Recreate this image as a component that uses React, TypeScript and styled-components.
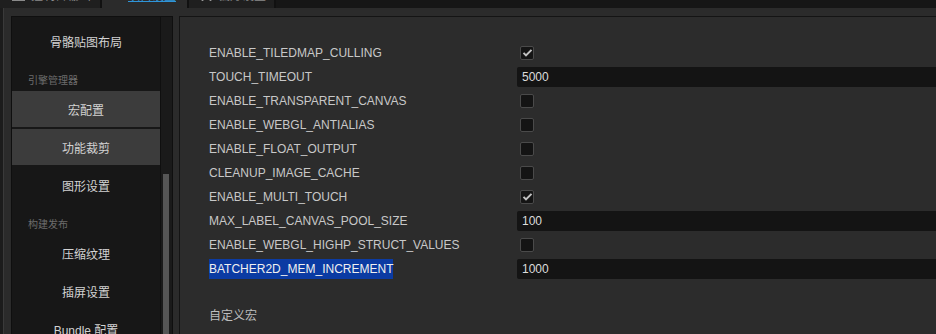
import React from 'react';
import styled, { createGlobalStyle } from 'styled-components';

const GlobalStyle = createGlobalStyle`
  html, body {
    margin: 0;
    padding: 0;
    background: #2b2b2b;
    overflow: hidden;
  }
`;

const FONT = `"Liberation Sans", Arial, "Noto Sans CJK SC", sans-serif`;

const Page = styled.div`
  width: 1000px;
  height: 334px;
  display: flex;
  flex-direction: column;
  background: #2b2b2b;
  font-family: ${FONT};
  overflow: hidden;
`;

const TabBar = styled.div`
  height: 8px;
  flex: none;
  display: flex;
  background: #161616;
  overflow: hidden;
`;

const Tab = styled.div<{ $active?: boolean; $width: number }>`
  width: ${p => p.$width}px;
  height: 8px;
  flex: none;
  display: flex;
  align-items: flex-end;
  gap: 6px;
  padding: 0 0 5px 12px;
  box-sizing: border-box;
  background: ${p => (p.$active ? '#2b2b2b' : '#1f1f1f')};
  border-right: 2px solid #111;
  overflow: hidden;
  color: ${p => (p.$active ? '#2f95d8' : '#8a8a8a')};
  font-size: 12px;
  line-height: 14px;
  white-space: nowrap;
  svg { flex: none; margin-bottom: 2px; }
`;

const Body = styled.div`
  flex: 1;
  min-height: 0;
  display: flex;
  padding-top: 8px;
`;

const EdgeStrip = styled.div`
  width: 3px;
  flex: none;
  margin-top: -8px;
  background: #1c1c1c;
  border-right: 1px solid #3a3a3a;
  margin-right: 7px;
`;

const Sidebar = styled.div`
  width: 162px;
  flex: none;
  box-sizing: border-box;
  display: flex;
  border: 1px solid #0f0f0f;
  border-bottom: none;
  background: #171717;
`;

const NavList = styled.div`
  width: 148px;
  flex: none;
  padding-top: 6px;
  border-right: 1px solid #0f0f0f;
  overflow: hidden;
`;

const NavItem = styled.div<{ $highlighted?: boolean }>`
  height: 36px;
  margin-bottom: 2px;
  display: flex;
  align-items: center;
  justify-content: center;
  background: ${p => (p.$highlighted ? '#3c3c3c' : 'transparent')};
  color: #d2d2d2;
  font-size: 12px;
  white-space: nowrap;
`;

const NavHeader = styled.div`
  height: 30px;
  box-sizing: border-box;
  padding: 14px 0 0 16px;
  line-height: 12px;
  font-size: 10px;
  color: #6c6c6c;
`;

const ScrollTrack = styled.div`
  width: 11px;
  flex: none;
  display: flex;
  flex-direction: column;
  box-sizing: border-box;
  padding: 0 3px 0 2px;
  background: #1a1a1a;
`;

const ScrollThumb = styled.div`
  flex: 1;
  background: #555;
`;

const Main = styled.div`
  flex: 1;
  margin-left: 6px;
  border: 1px solid #141414;
  border-bottom: none;
  background: #2c2c2c;
  padding: 24px 0 0 29px;
`;

const Row = styled.div`
  height: 24px;
  display: grid;
  grid-template-columns: 308px 1fr;
  align-items: center;
`;

const Label = styled.span<{ $selected?: boolean }>`
  justify-self: start;
  font-size: 12px;
  line-height: 20px;
  color: ${p => (p.$selected ? '#f0f0f0' : '#c8c8c8')};
  background: ${p => (p.$selected ? '#0b3ba3' : 'transparent')};
  white-space: nowrap;
`;

const Check = styled.div`
  width: 14px;
  height: 14px;
  margin-left: 3px;
  box-sizing: border-box;
  border: 1px solid #4a4a4a;
  border-radius: 2px;
  background: #141414;
  display: flex;
  align-items: center;
  justify-content: center;
`;

const NumberBox = styled.div`
  height: 20px;
  display: flex;
  align-items: center;
  padding-left: 5px;
  border-radius: 2px;
  background: #141414;
  color: #dcdcdc;
  font-size: 12px;
`;

const SectionTitle = styled.div`
  margin-top: 26px;
  line-height: 18px;
  font-size: 12px;
  color: #bdbdbd;
`;

type Macro = { name: string; value: boolean | number; selected?: boolean };

const macros: Macro[] = [
  { name: 'ENABLE_TILEDMAP_CULLING', value: true },
  { name: 'TOUCH_TIMEOUT', value: 5000 },
  { name: 'ENABLE_TRANSPARENT_CANVAS', value: false },
  { name: 'ENABLE_WEBGL_ANTIALIAS', value: false },
  { name: 'ENABLE_FLOAT_OUTPUT', value: false },
  { name: 'CLEANUP_IMAGE_CACHE', value: false },
  { name: 'ENABLE_MULTI_TOUCH', value: true },
  { name: 'MAX_LABEL_CANVAS_POOL_SIZE', value: 100 },
  { name: 'ENABLE_WEBGL_HIGHP_STRUCT_VALUES', value: false },
  { name: 'BATCHER2D_MEM_INCREMENT', value: 1000, selected: true },
];

type NavEntry = { header?: string; label?: string; highlighted?: boolean };

const nav: NavEntry[] = [
  { label: '骨骼贴图布局' },
  { header: '引擎管理器' },
  { label: '宏配置', highlighted: true },
  { label: '功能裁剪', highlighted: true },
  { label: '图形设置' },
  { header: '构建发布' },
  { label: '压缩纹理' },
  { label: '插屏设置' },
  { label: 'Bundle 配置' },
];

function CheckMark() {
  return (
    <svg width="11" height="9" viewBox="0 0 11 9">
      <path d="M0.8 4.6 L4 7.8 L10.2 1.6 L8.8 0.3 L4 5.1 L2.2 3.3 Z" fill="#c2c2c2" />
    </svg>
  );
}

function MacroRow({ m }: { m: Macro }) {
  return (
    <Row>
      <Label $selected={m.selected}>{m.name}</Label>
      {typeof m.value === 'number' ? (
        <NumberBox>{m.value}</NumberBox>
      ) : (
        <Check>{m.value && <CheckMark />}</Check>
      )}
    </Row>
  );
}

export default function App() {
  return (
    <Page>
      <GlobalStyle />
      <TabBar>
        <Tab $width={102}>
          <svg width="13" height="12" viewBox="0 0 13 12">
            <rect x="0" y="0" width="13" height="12" fill="#8a8a8a" />
          </svg>
          <span>控制台输出</span>
        </Tab>
        <Tab $width={87} $active>
          <svg width="8" height="12" viewBox="0 0 8 12">
            <circle cx="4" cy="6" r="4" fill="#2f95d8" />
          </svg>
          <span style={{ textDecoration: 'underline' }}>项目设置</span>
        </Tab>
        <Tab $width={87}>
          <svg width="11" height="12" viewBox="0 0 11 12">
            <path d="M1 0 L10 12 M10 0 L1 12" stroke="#9a9a9a" strokeWidth="1.6" />
          </svg>
          <span>偏好设置</span>
        </Tab>
      </TabBar>
      <Body>
        <EdgeStrip />
        <Sidebar>
          <NavList>
            {nav.map((n, i) =>
              n.header ? (
                <NavHeader key={i}>{n.header}</NavHeader>
              ) : (
                <NavItem key={i} $highlighted={n.highlighted}>{n.label}</NavItem>
              )
            )}
          </NavList>
          <ScrollTrack style={{ paddingTop: 157 }}>
            <ScrollThumb />
          </ScrollTrack>
        </Sidebar>
        <Main>
          {macros.map(m => (
            <MacroRow key={m.name} m={m} />
          ))}
          <SectionTitle>自定义宏</SectionTitle>
        </Main>
      </Body>
    </Page>
  );
}
